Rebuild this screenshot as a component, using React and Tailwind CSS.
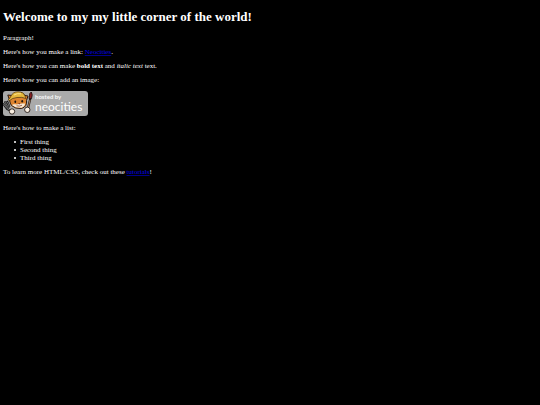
import React from "react";

const things = ["First thing", "Second thing", "Third thing"];

const NeocitiesBadge = () => {
    return (
        <svg viewBox="0 0 85 25" className="block w-[85px] h-[25px]" role="img" aria-label="hosted by neocities">
          <rect width="85" height="25" rx="3" fill="#aaaaaa" />

          {/* fork */}
          <path d="M0 12.5 L4 18 L8 20 M1.5 10.5 L6 17 M4 10 L6.5 16" stroke="#1a1a1a" strokeWidth="2" fill="none" />
          <path d="M0.5 13 L4 17.5 L8 20 M2 11 L5.5 16.5 M4.3 11 L6.3 15.5" stroke="#a8a8a8" strokeWidth="0.6" fill="none" />

          {/* brush */}
          <path d="M25 17 L27.5 7" stroke="#241a16" strokeWidth="2.2" />
          <path d="M25.3 16 L27 9" stroke="#d8a878" strokeWidth="0.7" />
          <path d="M26 7.5 L26.8 2.5 L28.3 1 Q30 3.5 28.5 7.5 Z" fill="#8c1f22" stroke="#241414" strokeWidth="0.9" />

          {/* cat */}
          <path d="M6.5 9 L4.8 4 L9 4.5 Q13 0 19 1.5 L22 4.5 L25 5 L23.5 9.5 Q24.5 15.5 18.5 17.5 Q12 18 8.5 14.5 Q7 12.5 6.5 9 Z" fill="#dc8430" stroke="#2a1a10" strokeWidth="1" />
          <path d="M9.5 13.5 Q11.5 12.8 14 13.5 Q17.5 12 22 12.5 Q22 15.5 18.5 16.7 Q12.5 17 9.5 14.4 Z" fill="#f7ead8" />
          <path d="M5 8.8 Q7.5 7 8 5 Q10 0.8 15 0.8 Q20.5 0.8 22 5 L23 7.5 Q19 5.8 14 6.5 Q9 7 6.5 9.6 Z" fill="#e4b73c" stroke="#4a3210" strokeWidth="0.7" />
          <path d="M11 4 Q14 2 18 2.8" stroke="#fae28a" strokeWidth="1" fill="none" />
          <ellipse cx="12.3" cy="10.7" rx="0.9" ry="1.3" fill="#1c1410" />
          <ellipse cx="19.2" cy="10.2" rx="0.9" ry="1.3" fill="#1c1410" />
          <path d="M15 12.4 L17.6 12.1 L16.4 13.5 Z" fill="#74301c" />
          <path d="M13.5 14.8 Q16.5 15.8 19 14.2" stroke="#74301c" strokeWidth="0.7" fill="none" />

          {/* paws */}
          <circle cx="9" cy="20.5" r="2.7" fill="#fbf0e2" stroke="#241a16" strokeWidth="0.9" />
          <circle cx="24.3" cy="18.8" r="2.7" fill="#fbf0e2" stroke="#241a16" strokeWidth="0.9" />

          <text x="32" y="8" fill="#f8f8f8" fontSize="6" fontWeight="700" fontFamily="Lato, sans-serif">hosted by</text>
          <text x="32" y="20" fill="#ffffff" fontSize="12" fontFamily="Lato, sans-serif">neocities</text>
        </svg>
    );
}

const App = () => {
    return (
        <main className="min-h-screen bg-black text-white px-[3px] pt-[9px] font-['Liberation_Serif',serif] text-[7px] leading-[8px]">
          <h1 className="text-[13px] leading-4 font-bold mb-[9px]">Welcome to my my little corner of the world!</h1>

          <div className="flex flex-col gap-[6px]">
            <p>Paragraph!</p>
            <p>
              Here's how you make a link: <a href="https://neocities.org" className="text-[#0000ee] underline decoration-[#000088]">Neocities</a>.
            </p>
            <p>
              Here's how you can make <strong>bold text</strong> and <em>italic text</em> text.
            </p>
            <p>Here's how you can add an image:</p>
          </div>

          <div className="mt-[7px] mb-[8px]">
            <NeocitiesBadge />
          </div>

          <div className="flex flex-col gap-[6px]">
            <p>Here's how to make a list:</p>
            <ul className="pl-[11px]">
              {things.map((thing) => (
                <li key={thing} className="flex items-center gap-1 before:size-[2px] before:rounded-full before:bg-white before:content-['']">
                  {thing}
                </li>
              ))}
            </ul>
            <p>
              To learn more HTML/CSS, check out these <a href="https://neocities.org/tutorials" className="text-[#0000ee] underline decoration-[#000088]">tutorials</a>!
            </p>
          </div>
        </main>
    );
}
export default App;
